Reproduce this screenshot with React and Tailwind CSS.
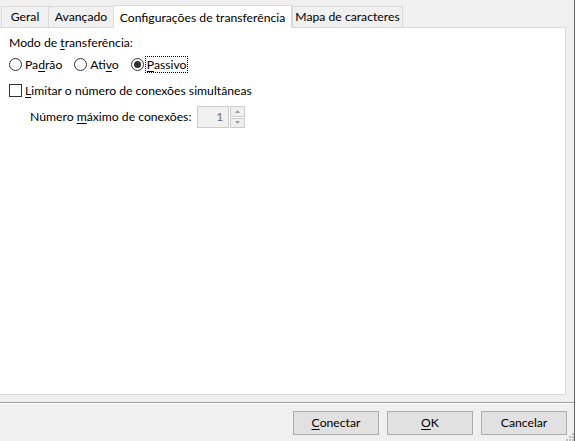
import React from "react";

const U = ({ children }) => <span className="underline underline-offset-2">{children}</span>;

function Radio({ checked, children, focus }) {
  return (
    <div className="flex items-center">
      <span className="w-[13px] h-[13px] rounded-full border border-[#333333] bg-white flex items-center justify-center">
        {checked && <span className="w-[7px] h-[7px] rounded-full bg-[#333333]" />}
      </span>
      <span className={"ml-[2px] px-[1px] leading-[15px] " + (focus ? "outline outline-1 outline-dotted outline-black" : "")}>{children}</span>
    </div>
  );
}

function Tab({ active, children, w, last }) {
  if (active) {
    return (
      <div className={`relative z-10 -mb-px h-[23px] bg-white border border-b-0 border-[#d9d9d9] flex items-start pt-[3px] justify-center whitespace-nowrap ${w}`}>
        {children}
      </div>
    );
  }
  return (
    <div className={`h-[21px] bg-[#f0f0f0] border-t border-l ${last ? "border-r" : ""} border-[#d9d9d9] flex items-center justify-center whitespace-nowrap ${w}`}>
      {children}
    </div>
  );
}

function Button({ children }) {
  return (
    <button className="w-[86px] h-[24px] bg-[#e1e1e1] border border-[#adadad] flex items-center justify-center text-black">
      {children}
    </button>
  );
}

export default function App() {
  return (
    <div
      className="w-[575px] h-[441px] bg-[#f0f0f0] flex overflow-hidden text-[12.2px] text-black"
      style={{ fontFamily: 'Lato, "Noto Sans", sans-serif' }}
    >
      <div className="flex-1 flex flex-col">
        <div className="h-[27px] flex items-end pl-[1px]">
          <Tab w="w-[47px]">Geral</Tab>
          <Tab w="w-[65px]">Avançado</Tab>
          <Tab active w="w-[179px]">Configurações de transferência</Tab>
          <Tab last w="w-[111px]">Mapa de caracteres</Tab>
        </div>
        <div className="w-[566px] h-[368px] bg-white border-t border-r border-b border-[#d9d9d9] flex flex-col pl-[9px]">
          <div className="mt-[7px] leading-[16px]">
            Modo de <U>t</U>ransferência:
          </div>
          <div className="mt-[6px] flex items-center gap-[11px]">
            <Radio>Pa<U>d</U>rão</Radio>
            <Radio>Ati<U>v</U>o</Radio>
            <Radio checked focus><U>P</U>assivo</Radio>
          </div>
          <div className="mt-[11px] flex items-center">
            <span className="w-[13px] h-[13px] border border-[#333333] bg-white" />
            <span className="ml-[3px] leading-[15px]"><U>L</U>imitar o número de conexões simultâneas</span>
          </div>
          <div className="mt-[8px] flex items-center pl-[21px]">
            <span>Número <U>m</U>áximo de conexões:</span>
            <div className="ml-[6px] flex items-stretch h-[22px]">
              <div className="w-[32px] border border-[#cccccc] bg-[#f0f0f0] text-[#6d6d6d] flex items-center justify-end pr-[5px]">1</div>
              <div className="ml-[1px] w-[15px] flex flex-col gap-px">
                <div className="flex-1 border border-[#cccccc] bg-[#f0f0f0] flex items-center justify-center">
                  <svg width="5" height="3" viewBox="0 0 5 3"><path d="M0 3 L2.5 0 L5 3 Z" fill="#a0a0a0" /></svg>
                </div>
                <div className="flex-1 border border-[#cccccc] bg-[#f0f0f0] flex items-center justify-center">
                  <svg width="5" height="3" viewBox="0 0 5 3"><path d="M0 0 L5 0 L2.5 3 Z" fill="#a0a0a0" /></svg>
                </div>
              </div>
            </div>
          </div>
        </div>
        <div className="mt-[7px] h-px bg-[#a0a0a0]" />
        <div className="h-px bg-white" />
        <div className="mt-[7px] flex justify-end gap-[8px] pr-[7px] relative">
          <Button><U>C</U>onectar</Button>
          <Button><U>O</U>K</Button>
          <Button>Cancelar</Button>
        </div>
        <div className="relative flex-1">
          <svg className="absolute right-0 bottom-0" width="8" height="8" viewBox="0 0 8 8">
            <g fill="#c0c0c0">
              <rect x="6" y="0" width="2" height="2" />
              <rect x="3" y="3" width="2" height="2" />
              <rect x="6" y="3" width="2" height="2" />
              <rect x="0" y="6" width="2" height="2" />
              <rect x="3" y="6" width="2" height="2" />
              <rect x="6" y="6" width="2" height="2" />
            </g>
          </svg>
        </div>
      </div>
      <div className="w-px bg-[#646464]" />
    </div>
  );
}
